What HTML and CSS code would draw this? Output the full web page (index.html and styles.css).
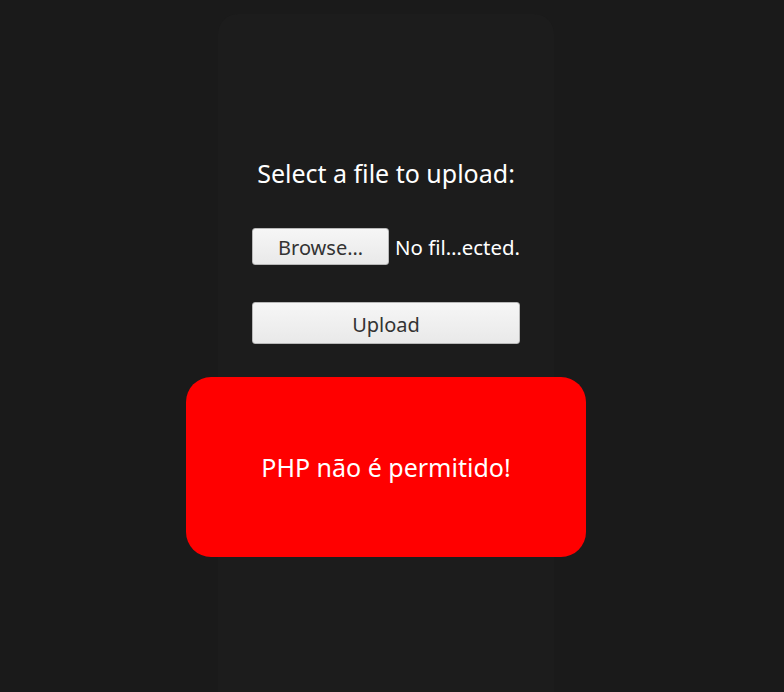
FILE: index.html
```html
<!DOCTYPE html>
<html>
<head>
<meta charset="utf-8">
<link rel="stylesheet" href="styles.css">
</head>
<body>
<main class="card">
  <form class="upload-form">
    <h1 class="title">Select a file to upload:</h1>
    <div class="file-row">
      <span class="btn browse">Browse…</span>
      <span class="file-name">No fil…ected.</span>
    </div>
    <button type="button" class="btn upload">Upload</button>
  </form>
  <div class="alert">PHP não é permitido!</div>
</main>
</body>
</html>
```

FILE: styles.css
```css
html, body {
  margin: 0;
  padding: 0;
  background: #1a1a1a;
  height: 100%;
  overflow: hidden;
}
body {
  font-family: "Noto Sans", "Open Sans", sans-serif;
  color: #ffffff;
}
.card {
  box-sizing: border-box;
  width: 336px;
  min-height: 700px;
  margin: 14px 0 0 218px;
  background: #1c1c1c;
  border-radius: 20px;
  display: flex;
  flex-direction: column;
  align-items: center;
  padding-top: 142px;
}
.upload-form {
  display: flex;
  flex-direction: column;
  align-items: center;
}
.title {
  margin: 0;
  font-size: 25px;
  font-weight: 400;
  line-height: 34px;
}
.file-row {
  display: flex;
  align-items: center;
  gap: 6px;
  margin-top: 38px;
  width: 268px;
}
.btn {
  box-sizing: border-box;
  display: flex;
  align-items: center;
  justify-content: center;
  background: linear-gradient(#f6f6f6, #e9e9e9);
  border: 1px solid #b8b8b8;
  border-radius: 3px;
  color: #333;
  font-family: inherit;
  font-size: 20px;
}
.browse {
  width: 137px;
  height: 37px;
  padding-top: 1px;
}
.file-name {
  font-size: 20.4px;
  white-space: nowrap;
}
.upload {
  margin-top: 37px;
  width: 268px;
  height: 42px;
  padding: 3px 0 0;
}
.alert {
  flex: none;
  margin-top: 33px;
  width: 400px;
  height: 180px;
  background: #ff0000;
  border-radius: 25px;
  display: flex;
  align-items: center;
  justify-content: center;
  font-size: 25px;
}
```
